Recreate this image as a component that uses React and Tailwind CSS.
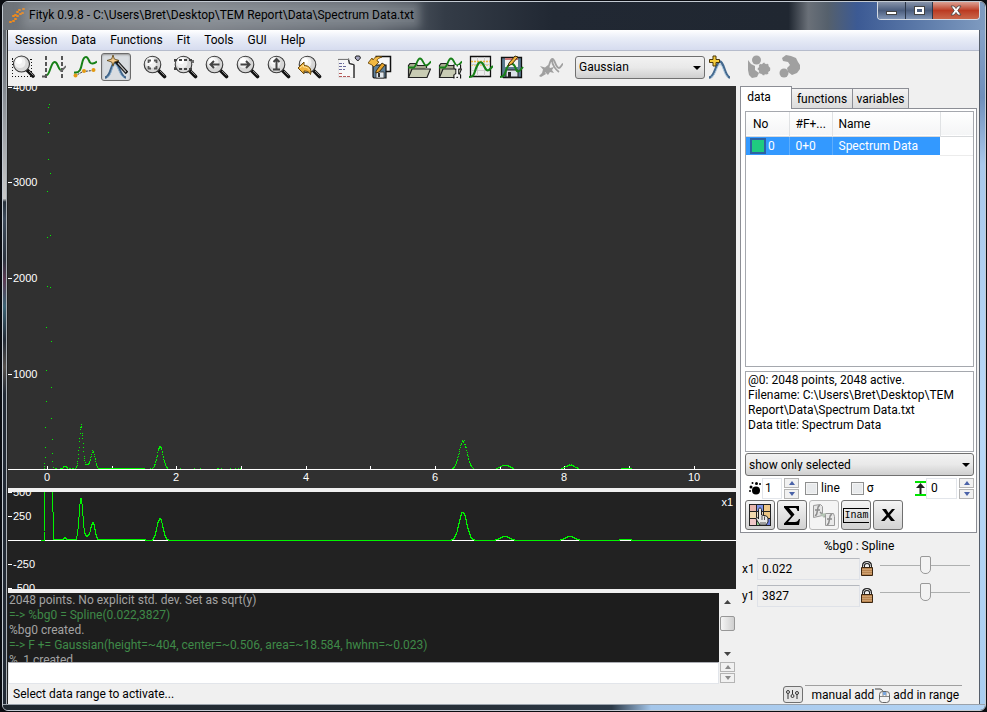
import React from "react";

const noise = (i) => {
  const v = Math.sin(i * 12.9898) * 43758.5453;
  return v - Math.floor(v);
};

const PEAKS = [
  [57, 3, 1.5],
  [73, 41, 1.8],
  [85, 16, 2],
  [79, 4, 5],
  [152, 22, 2.9],
  [455, 28, 3.9],
  [497, 4, 4.5],
  [562, 4, 4.5],
  [618, 1, 5],
];

const signal = (x) =>
  PEAKS.reduce((sum, [c, h, s]) => sum + h * Math.exp(-((x - c) ** 2) / (2 * s * s)), 0);

const BEAM = [
  [41, 18], [40, 21], [41, 37], [40, 46], [40, 73], [42, 87], [39, 105], [42, 149], [39, 151],
  [39, 200], [42, 201], [38, 241], [43, 255], [38, 284], [43, 301], [38, 315], [43, 332],
  [37, 341], [44, 353], [37, 361], [44, 367], [37, 371], [44, 375], [36, 377], [36, 380], [36, 382], [45, 381],
];

function buildDots() {
  let d = "";
  const dot = (x, y) => {
    d += `M${x} ${y}h1v1h-1z`;
  };
  BEAM.forEach(([x, y]) => dot(x, y));
  for (let i = 0; i < 1920; i++) {
    const x = 46 + i / 3;
    const s = signal(x);
    const r = noise(i + 7);
    if (s > 0.6) {
      dot(Math.floor(x), Math.round(382.6 - s * (0.94 + r * 0.12)));
    } else if (x > 52 && x < 138 && r > 0.45) {
      dot(Math.floor(x), 382);
    } else if (x < 240 && r > 0.97) {
      dot(Math.floor(x), 382);
    }
  }
  return d;
}

function buildResidual() {
  let d = "M33 48.5H36V40L37 0V-10H44L45 20L46 47.5";
  for (let x = 47; x < 694; x++) {
    const s = signal(x) * (0.98 + noise(x) * 0.06);
    const base = x < 138 ? 47.5 : 48.5;
    d += `L${x} ${Math.min(base, 48.5 - Math.round(s))}`;
  }
  return d;
}

const DOTS = buildDots();
const RESIDUAL = buildResidual();
const X_TICKS = [39, 104, 168, 233, 298, 362, 427, 492, 556, 621, 686];
const X_LABELS = [[39, "0"], [168, "2"], [298, "4"], [427, "6"], [556, "8"], [686, "10"]];

function MainPlot() {
  return (
    <svg className="block h-full w-full bg-[#303030] text-[11px]" role="img" aria-label="Data plot">
      <g fill="#fff" shapeRendering="crispEdges">
        <rect x="0" y="383" width="100%" height="1" />
        {X_TICKS.map((x) => <rect key={x} x={x} y="380" width="1" height="3" />)}
        {[1, 96, 192, 288].map((y) => <rect key={y} x="0" y={y} width="4" height="1" />)}
      </g>
      <g fill="#fff" className="font-['Liberation_Sans',sans-serif]">
        {[["4000", 5], ["3000", 100], ["2000", 196], ["1000", 292]].map(([t, y]) => (
          <text key={t} x="5" y={y}>{t}</text>
        ))}
        {X_LABELS.map(([x, t]) => <text key={t} x={x} y="395" textAnchor="middle">{t}</text>)}
      </g>
      <path d={DOTS} fill="#00f400" shapeRendering="crispEdges" />
    </svg>
  );
}

function ResidualPlot() {
  return (
    <svg className="block h-full w-full bg-[#222222] text-[11px]" role="img" aria-label="Residual plot">
      <g fill="#fff" shapeRendering="crispEdges">
        <rect x="0" y="48" width="100%" height="1" />
        {[0, 24, 72, 96].map((y) => <rect key={y} x="0" y={y} width="4" height="1" />)}
      </g>
      <g fill="#fff" className="font-['Liberation_Sans',sans-serif]">
        <text x="5" y="4">500</text>
        <text x="5" y="28">250</text>
        <text x="5" y="76">-250</text>
        <text x="5" y="100">-500</text>
        <svg x="100%" overflow="visible"><text x="-3" y="14" textAnchor="end">x1</text></svg>
      </g>
      <path d={RESIDUAL} fill="none" stroke="#00f400" shapeRendering="crispEdges" />
    </svg>
  );
}

const Icon = ({ children, size = 24 }) => (
  <svg width={size} height={size} viewBox={`0 0 ${size} ${size}`} fill="none" className="shrink-0" aria-hidden="true">
    {children}
  </svg>
);

const Lens = ({ children }) => (
  <Icon>
    <path d="M15 15l6.500 6.500" stroke="#111" strokeWidth="3.600" strokeLinecap="round" />
    <path d="M17 16l4.500 4.500" stroke="#8a8a8a" strokeWidth="1" />
    <circle cx="9.500" cy="9.500" r="8.300" fill="#d6d6d6" stroke="#3c3c3c" strokeWidth="1.100" />
    <circle cx="8" cy="7.500" r="5.500" fill="#f0f0f0" />
    <circle cx="7" cy="6" r="3" fill="#fff" />
    {children}
  </Icon>
);

const ZoomRect = () => (
  <Icon>
    <path d="M1.500 3v19M1 4.500h19M1 21.500h20M20.500 4v18" stroke="#111" strokeDasharray="1 2" shapeRendering="crispEdges" />
    <path d="M16 15l6 6" stroke="#111" strokeWidth="3.600" strokeLinecap="round" />
    <path d="M18 16l4.500 4.500" stroke="#8a8a8a" />
    <circle cx="10.500" cy="9" r="8" fill="#d9d9d9" stroke="#3c3c3c" strokeWidth="1.100" />
    <circle cx="9" cy="7.500" r="5.500" fill="#f2f2f2" />
    <circle cx="8" cy="6" r="3" fill="#fff" />
  </Icon>
);
const DataRange = () => (
  <Icon>
    <path d="M4 1v22M20 1v22" stroke="#555" strokeWidth="2" strokeDasharray="4 2" shapeRendering="crispEdges" />
    <path d="M0 21.500h3l2-2" stroke="#555" strokeWidth="2" />
    <path d="M5 20c3-1 4-13 7.500-13s3 6 6 8" stroke="#178017" strokeWidth="2" />
    <path d="M18 16l2-.5 4-4.500" stroke="#666" strokeWidth="1.700" />
  </Icon>
);
const Baseline = () => (
  <Icon>
    <path d="M1 17.500c6 1 7-4 8-9s2-6.500 4-6.500 3 4 4 5.500 4 1.500 7-1" stroke="#178017" strokeWidth="2" />
    <path d="M2 21l8-4.500 10-1" stroke="#333" strokeDasharray="2 1" />
    <circle cx="2.500" cy="20.500" r="2" fill="#e39a12" /><circle cx="11" cy="16" r="2" fill="#e39a12" /><circle cx="20.500" cy="15" r="2" fill="#e39a12" />
  </Icon>
);
const Wand = () => (
  <Icon>
    <path d="M1 22.500c6 0 6-15 10-15s5 15 11 15" stroke="#3f648a" strokeWidth="2.400" />
    <path d="M3 22.500c5-2 5-13 8-13s4 11 9 13" stroke="#8fb2d0" />
    <path d="M12 6l11 12" stroke="#111" strokeWidth="3.400" />
    <path d="M14 8l8 9" stroke="#bbb" strokeWidth="1.200" />
    <path d="M9 0l1.300 4 4.700 1.500-4.700 1.500L9 11 7.700 7 3 5.500 7.700 4z" fill="#f2c98c" stroke="#5c4413" strokeWidth=".8" />
  </Icon>
);
const ZoomAll = () => <Lens><path d="M5.500 8V5.500H8M11 5.500h2.500V8M13.500 11v2.500H11M8 13.500H5.500V11" stroke="#555" strokeWidth="1.800" /></Lens>;
const ZoomH = () => <Lens><path d="M0 5h20M0 14h20" stroke="#444" strokeWidth="1.800" strokeDasharray="3 2" /><path d="M1 5v2M19 5v3M1 12v2" stroke="#444" strokeWidth="1.500" /></Lens>;
const ZoomLeft = () => <Lens><path d="M14.500 9.500h-9M9 6l-3.500 3.500L9 13" stroke="#444" strokeWidth="2" /></Lens>;
const ZoomRight = () => <Lens><path d="M4.500 9.500h9M10 6l3.500 3.500L10 13" stroke="#444" strokeWidth="2" /></Lens>;
const ZoomV = () => <Lens><path d="M9.500 4.500v10M6.500 7l3-3 3 3M6 14.500h7" stroke="#444" strokeWidth="2" /></Lens>;
const ZoomPrev = () => (
  <Lens>
    <path d="M0 13l6-6v3.500c5 0 8 3 6.500 9C11 16.500 9 16 6 16v3z" fill="#f0b23c" stroke="#6b4a0c" />
    <path d="M2 13l3.500-3v2c3 0 5 1 6 3" stroke="#ffe29a" />
  </Lens>
);
const Script = () => (
  <Icon>
    <path d="M1.500 3.500h11l5 5v14h-16z" fill="#f7f7f7" stroke="#e2e2e2" />
    <path d="M11 4c1 0 1 4 1.500 4.500S17 9 17 10v13" stroke="#333" strokeWidth="1.500" />
    <path d="M1 4.500h11" stroke="#777" />
    <path d="M2 8.500h5M2 11.500h8M2 14.500h6" stroke="#6a6a9c" strokeDasharray="3 1" strokeWidth="1.200" />
    <path d="M2 18.500h4M2 21.500h12" stroke="#b55b5b" strokeDasharray="3 1" strokeWidth="1.200" />
    <path d="M19 1h3.500l1 2-2.700 3-2.800-3z" fill="#a5a5c0" stroke="#222" />
  </Icon>
);
const SaveSession = () => (
  <Icon>
    <path d="M7.500 1.500h15v15h-6" fill="#f8f8f8" stroke="#111" strokeWidth="1.500" />
    <path d="M5 10h13v13H6l-1-1z" fill="#5f7f99" stroke="#111" strokeWidth="1.200" />
    <path d="M8 17h8v6H8z" fill="#dfe6ec" stroke="#333" strokeWidth=".8" /><path d="M10 18h2v4h-2z" fill="#333" />
    <path d="M0 8l4-5 1 2c2-4 6-4 9-3-3 1-5 2-5 4l2 1-5 5-2-2z" fill="#f3b942" stroke="#6b4a0c" strokeWidth=".9" />
    <path d="M8 16l6-8 3 2-6 7-3 1z" fill="#e9a52b" stroke="#3a2a0a" strokeWidth=".9" />
  </Icon>
);
const folder = (
  <>
    <path d="M1.500 22V10.500l1.500-2h6l1.500 2h9V13" fill="#a6a98f" stroke="#222" strokeWidth="1.200" />
    <path d="M1.500 22.500L5 14h18.500L20 22.500z" fill="#c9ccb4" stroke="#222" strokeWidth="1.200" />
    <path d="M1 12.500h6c3-2 3-9 6-9s3 6 6 7c2 0 3-2 5-4" stroke="#178017" strokeWidth="1.800" />
  </>
);
const OpenFolder = () => <Icon>{folder}</Icon>;
const OpenCustom = () => (
  <Icon>
    {folder}
    <path d="M16 9.500v3.500l2 1.500v4L16 20v3.500M22.500 9.500V13l-2 1.500v4l2 1.500v3.500" stroke="#111" strokeWidth="1.300" />
    <path d="M17.500 10v2.500h3.500V10M19.300 12v9M17.500 23.500v-3h3.500v3" stroke="#f4f4f4" strokeWidth="1.800" />
  </Icon>
);
const GraphIcon = () => (
  <Icon>
    <path d="M1.500 1.500h20v20h-20z" fill="#ededed" stroke="#111" strokeWidth="1.300" />
    <path d="M2 9.500h19M2 15.500h19M8.500 2v19M15.500 2v19" stroke="#ccc" />
    <path d="M2 6.500h19" stroke="#eeb23a" strokeWidth="1.500" strokeDasharray="2 1" /><path d="M2 10.500h19" stroke="#f0cf84" strokeDasharray="2 1" />
    <path d="M0 22c6 0 5-5 8-11 2-5 5-5 7 0 2 4 3 5 5 4l4-4" stroke="#178017" strokeWidth="2.200" />
  </Icon>
);
const SaveGraph = () => (
  <Icon>
    <path d="M1.500 2.500h20v20h-18l-2-2z" fill="#5a7a90" stroke="#111" strokeWidth="1.300" />
    <path d="M5 3h13v9H5z" fill="#f1f1f1" /><path d="M5 3h13v2H5z" fill="#c77" />
    <path d="M6 15h12v7H6z" fill="#dbe2e7" stroke="#222" /><path d="M8 17h3v5H8z" fill="#222" />
    <path d="M0 22c6 0 5-7 8-11 3-4 6-3 8 3 1 4 3 3 7-2" stroke="#178017" strokeWidth="2" />
    <path d="M9 8l6-7 3 1-6 7-4 2z" fill="#f0b23c" stroke="#3a2a0a" />
  </Icon>
);
const RunFit = () => (
  <Icon>
    <path d="M9 13c2-4 2-9 4.500-9s3 9 6.500 9c1.500 0 2-2 4-4.500M13 5c0 5 4 10 7 12" stroke="#a0a0a0" strokeWidth="1.800" />
    <path d="M1 11l5 1.500 3-2.500 2 3 4-1-2 3 2 3-4-1-2 3-3-3-3 1 1-3.500z" fill="#a0a0a0" />
    <path d="M0 21l5-5 2 3-5 3z" fill="#a0a0a0" />
  </Icon>
);
const AddPeak = () => (
  <Icon>
    <path d="M1 22.500c6 0 7-16 11-16s5 16 10 16" stroke="#456a8f" strokeWidth="2.400" />
    <path d="M3 22.500c5-2 6-13 9-13s4 11 8 13" stroke="#a9c5dc" />
    <path d="M5 1h3v3.500h3.500v3H8V11H5V7.500H1.500v-3H5z" fill="#f5cd3d" stroke="#4a3608" />
  </Icon>
);
const ClusterA = () => (
  <Icon>
    <path d="M1 5l3 4 4 2v4l4 3-2 4-5 1-3-3-1-5z" fill="#a0a0a0" />
    <circle cx="9.500" cy="5" r="4.500" fill="#a0a0a0" />
    <circle cx="17" cy="14" r="5.500" fill="#a0a0a0" stroke="#a0a0a0" strokeWidth="1.500" strokeDasharray="2 2" />
  </Icon>
);
const ClusterB = () => (
  <Icon>
    <path d="M4 3l4-3 5 1 5 2 2 4 2 3v4l-3 4-5 2-4-3-1-4 3-3-2-3-5-1z" fill="#a0a0a0" />
    <circle cx="6" cy="18" r="4.500" fill="#a0a0a0" />
  </Icon>
);

const GROUPS = [
  [["Zoom", ZoomRect], ["Data range", DataRange], ["Baseline", Baseline], ["Add peak mode", Wand, true]],
  [["Zoom all", ZoomAll], ["Fit vertically", ZoomH], ["Scroll left", ZoomLeft], ["Scroll right", ZoomRight], ["Scroll up", ZoomV], ["Previous zoom", ZoomPrev]],
  [["Execute script", Script], ["Save session", SaveSession]],
  [["Open data", OpenFolder], ["Custom load", OpenCustom], ["Edit data", GraphIcon], ["Save data", SaveGraph]],
  [["Run fit", RunFit]],
];

function ToolButton({ label, glyph: Glyph, active }) {
  return (
    <button
      aria-label={label}
      className={
        "flex h-[28px] w-[30px] items-center justify-center rounded-[3px] " +
        (active ? "border border-[#6b6b6b] bg-[#d9dde1] shadow-[inset_0_1px_2px_#999]" : "")
      }
    >
      <Glyph />
    </button>
  );
}

function Choice({ label, value, className }) {
  return (
    <div className={"relative " + className}>
      <select
        aria-label={label}
        className="block h-[23px] w-full appearance-none rounded-[3px] border border-[#707070] bg-linear-to-b from-[#f2f2f2] via-[#e9e9e9] to-[#cfcfcf] pl-[3px] text-[12px] leading-none text-black"
      >
        <option>{value}</option>
      </select>
      <svg width="8" height="4" className="pointer-events-none absolute top-[10px] right-[4px]"><path d="M0 0h8L4 4z" fill="#000" /></svg>
    </div>
  );
}

function Spin({ muted }) {
  const tone = muted ? "#8a8a8a" : "#4a62a8";
  return (
    <div className="flex w-[15px] flex-col gap-px">
      {["M0 4h6L3 0z", "M0 0h6L3 4z"].map((d, i) => (
        <button key={d} aria-label={i ? "Decrease" : "Increase"} className="flex h-[10px] items-center justify-center border border-[#b4b4b4] bg-[#f1f1f1]">
          <svg width="6" height="4"><path d={d} fill={tone} /></svg>
        </button>
      ))}
    </div>
  );
}

const PanelButton = ({ label, children, disabled }) => (
  <button
    aria-label={label}
    disabled={disabled}
    className="flex size-[30px] items-center justify-center rounded-[3px] border border-[#707070] bg-linear-to-b from-[#f4f4f4] to-[#d2d2d2] disabled:border-[#b8b8b8] disabled:bg-[#f4f4f4] disabled:bg-none"
  >
    {children}
  </button>
);

const ColorGrid = () => (
  <Icon>
    <path d="M1 1h22v22H1z" fill="#222" />
    {[["#e8b7ae", 2, 2], ["#7d93e6", 9, 2], ["#f0c98a", 16, 2], ["#f2d9ae", 2, 9], ["#e8dcc8", 9, 9], ["#eac584", 16, 9], ["#f0c8c8", 2, 16], ["#8fd08f", 9, 16], ["#6c7fe0", 16, 16]].map(([c, x, y]) => (
      <rect key={x + "-" + y} x={x} y={y} width="6" height="6" fill={c} />
    ))}
    <path d="M10.500 6.500c0-2 3-2 3 0V12l5 1 1.500 2v4l-2 3h-6l-4-6c0-2 2-2 2.500 0z" fill="#e8e8e8" stroke="#222" />
    <path d="M14 13v4M16.500 13.500v3.500M12 20h6" stroke="#555" />
  </Icon>
);
const Sigma = () => <Icon><path d="M4 3h15v5h-1.500c-.5-2-1-3-3-3H9l5.500 6.500L8 19h7c2 0 3-1 4-3h1l-1 6H4v-1.500L11 13 4 4.500z" fill="#000" /></Icon>;
const CopyFn = () => (
  <Icon>
    <path d="M1.500 2.500l7-1 2 2v9l-9 2z" fill="#e6e6e6" stroke="#9a9a9a" /><path d="M13.500 10.500h8l1 3v9h-9z" fill="#e9e9e9" stroke="#9a9a9a" />
    <path d="M8 3c-2-1-2 2-2.500 4S5 13 3 12M3 7h5M20 12c-2-1-2 2-2.500 4s-.5 6-2.500 5M15 16h5M8 9l5 5" stroke="#8c8c8c" strokeWidth="1.500" />
    <path d="M8 11l6-1-2 5z" fill="#b5c5b5" />
  </Icon>
);
const Cross = () => <Icon><path d="M6 6h4l2.500 4L16 6h3l-5 6 5 6h-4l-3-4-3.500 4H5l5.500-6z" fill="#000" /></Icon>;

const Lock = () => (
  <svg width="12" height="15" fill="none" aria-hidden="true">
    <path d="M2.500 7V4.500c0-4 7-4 7 0V7" stroke="#222" strokeWidth="3" /><path d="M2.500 7V4.500c0-4 7-4 7 0V7" stroke="#ddd" />
    <path d="M.5 6.500h11v8H.5z" fill="#b98550" stroke="#3a2510" /><path d="M1 8.500h10M1 10.500h10M1 12.500h10" stroke="#dcb184" strokeWidth=".6" />
  </svg>
);

function Param({ name, value }) {
  return (
    <div className="flex h-[27px] items-center">
      <label htmlFor={"p-" + name} className="w-[17px] pl-[2px]">{name}</label>
      <input id={"p-" + name} defaultValue={value} className="h-[22px] min-w-0 flex-1 border border-[#dfe2e8] border-t-[#b5b8be] bg-[#efefef] pl-[4px]" />
      <button aria-label={"Lock " + name} className="flex w-[13px] justify-center"><Lock /></button>
      <input
        type="range"
        aria-label={name + " slider"}
        className="mr-[8px] ml-[7px] h-[20px] w-[90px] appearance-none self-start bg-[linear-gradient(#aeb0b0,#aeb0b0)] bg-[length:100%_1px] bg-center bg-no-repeat [&::-webkit-slider-thumb]:h-[18px] [&::-webkit-slider-thumb]:w-[11px] [&::-webkit-slider-thumb]:appearance-none [&::-webkit-slider-thumb]:rounded-t-[2px] [&::-webkit-slider-thumb]:rounded-b-[5px] [&::-webkit-slider-thumb]:border [&::-webkit-slider-thumb]:border-[#999] [&::-webkit-slider-thumb]:bg-[#f3f3f3]"
      />
    </div>
  );
}

function TitleBar() {
  return (
    <header className="flex h-[28px] shrink-0 items-start bg-[linear-gradient(to_right,#6d7278_0%,#7d8289_20%,#5d646d_38%,#343c47_45%,#212833_56%,#202731_80%,#6a7078_82%,#55606c_84%,#3c5a94_87%,#5f7dab_94%,#7f9bc0_100%)] pl-[6px]">
      <svg width="16" height="18" className="mt-[4px]" aria-hidden="true">
        {[[0, 15], [3, 14], [5, 12], [5, 8], [7, 5], [7, 9], [9, 3], [3, 9], [10, 7], [13, 2], [12, 6]].map(([x, y]) => (
          <rect key={x + "-" + y} x={x} y={y} width="3" height="2" rx="1" fill="#f08a1c" />
        ))}
      </svg>
      <h1 className="mt-[4px] ml-[4px] flex-1 text-[12px] leading-[18px] whitespace-nowrap text-black">
        <span className="bg-[#9aa0a6]/50 shadow-[0_0_8px_6px_rgba(154,160,166,0.5)]">Fityk 0.9.8 - C:\Users\Bret\Desktop\TEM Report\Data\Spectrum Data.txt</span>
      </h1>
      <div className="mr-[5px] flex h-[18px] overflow-hidden rounded-b-[4px] border border-t-0 border-[#d5dbe3]">
        <button aria-label="Minimize" className="flex w-[28px] items-center justify-center border-r border-[#2b3648] bg-linear-to-b from-[#8894aa] via-[#4b5d7d] to-[#8195b5]">
          <span className="mt-[4px] h-[4px] w-[11px] border border-[#444] bg-white" />
        </button>
        <button aria-label="Maximize" className="flex w-[27px] items-center justify-center border-r border-[#2b3648] bg-linear-to-b from-[#8894aa] via-[#4b5d7d] to-[#8195b5]">
          <span className="h-[9px] w-[11px] border border-[#444] bg-white p-[2px]"><span className="block h-[3px] bg-[#4b5d7d]" /></span>
        </button>
        <button aria-label="Close" className="flex w-[46px] items-center justify-center bg-linear-to-b from-[#dba093] via-[#bb3a22] to-[#c9664a]">
          <svg width="12" height="11"><path d="M1 1h3l2 2.500L8 1h3L7.800 5.500 11 10H8L6 7.500 4 10H1l3.200-4.500z" fill="#fff" stroke="#444" strokeWidth=".8" /></svg>
        </button>
      </div>
    </header>
  );
}

function DataPanel() {
  return (
    <section className="flex flex-col pr-px">
      <div role="tablist" className="flex h-[22px] items-end text-[12px]">
        <button role="tab" aria-selected="true" className="z-10 -mb-px h-[23px] w-[52px] border border-b-0 border-[#8c8e95] bg-white pr-[14px] pb-[2px] text-center">
          data
        </button>
        <button role="tab" className="h-[20px] w-[61px] border border-b-0 border-l-0 border-[#8c8e95] bg-linear-to-b from-[#f3f3f3] to-[#dcdcdc]">functions</button>
        <button role="tab" className="h-[20px] w-[56px] border border-b-0 border-l-0 border-[#8c8e95] bg-linear-to-b from-[#f3f3f3] to-[#dcdcdc]">variables</button>
      </div>
      <div className="flex flex-col border border-[#8c8e95] bg-white pt-[2px] pr-[2px] pb-[2px] pl-[4px]">
        <div className="h-[256px] border border-[#a5a8ae] bg-white">
          <table className="w-full table-fixed border-collapse text-left text-[12px]">
            <thead>
              <tr className="h-[24px] border-b border-[#d8dadc] bg-linear-to-b from-white to-[#f4f5f6]">
                <th className="w-[43px] border-r border-[#e0e2e4] pl-[7px] font-normal">No</th>
                <th className="w-[43px] border-r border-[#e0e2e4] pl-[6px] font-normal">#F+...</th>
                <th className="w-[108px] border-r border-[#e0e2e4] pl-[6px] font-normal">Name</th>
                <th />
              </tr>
            </thead>
            <tbody>
              <tr className="h-[19px] text-white">
                <td className="border-r border-[#5eaefd] bg-[#3399ff]">
                  <div className="flex items-center"><span className="ml-[4px] size-[16px] border-2 border-[#2d62a3] bg-[#1fcb80]" /><span className="ml-[2px]">0</span></div>
                </td>
                <td className="border-r border-[#5eaefd] bg-[#3399ff] pl-[6px]">0+0</td>
                <td className="bg-[#3399ff] pl-[6px]">Spectrum Data</td>
                <td className="border-b border-[#ececec]" />
              </tr>
            </tbody>
          </table>
        </div>
        <textarea
          aria-label="Dataset information"
          readOnly
          className="mt-[4px] block h-[81px] w-full resize-none overflow-hidden border border-[#a5a8ae] bg-white px-[2px] py-[1px] text-[12px] leading-[15px]"
          defaultValue={"@0: 2048 points, 2048 active.\nFilename: C:\\Users\\Bret\\Desktop\\TEM Report\\Data\\Spectrum Data.txt\nData title: Spectrum Data"}
        />
        <Choice label="Displayed data" value="show only selected" className="mt-px w-full" />
        <div className="flex h-[24px] items-center">
          <svg width="14" height="14" className="ml-[3px] shrink-0" aria-hidden="true">
            <circle cx="8" cy="9.500" r="4" /><circle cx="3" cy="6" r="1.500" /><circle cx="4.500" cy="2" r="1" /><circle cx="8.500" cy="2.500" r="1.500" /><circle cx="2" cy="10" r="1" /><circle cx="12" cy="3" r="1" />
          </svg>
          <input aria-label="Point size" defaultValue="1" className="h-[21px] w-[20px] border border-[#e2e5ea] pl-[2px] text-[12px]" />
          <span className="w-[2px]" />
          <Spin />
          <label className="ml-[6px] flex items-center gap-[3px]">
            <input type="checkbox" className="size-[13px] appearance-none border border-[#8e8f8f] bg-[#e8eaec] shadow-[inset_0_0_0_1px_#f4f4f4]" />line
          </label>
          <label className="ml-[11px] flex items-center gap-[3px]">
            <input type="checkbox" className="size-[13px] appearance-none border border-[#8e8f8f] bg-[#e8eaec] shadow-[inset_0_0_0_1px_#f4f4f4]" />σ
          </label>
          <svg width="11" height="15" className="ml-auto" aria-hidden="true">
            <path d="M0 1h11M0 14h11" stroke="#00e400" strokeWidth="2" /><path d="M5.500 4v9" stroke="#222" strokeWidth="2" /><path d="M1 7l4.500-5L10 7z" fill="#222" />
          </svg>
          <input aria-label="Vertical shift" defaultValue="0" className="h-[21px] w-[31px] border border-[#e2e5ea] pl-[4px] text-[12px]" />
          <span className="w-[2px]" />
          <Spin />
        </div>
        <div className="flex gap-[2px]">
          <PanelButton label="Colors"><ColorGrid /></PanelButton>
          <PanelButton label="Sum"><Sigma /></PanelButton>
          <PanelButton label="Copy functions" disabled><CopyFn /></PanelButton>
          <PanelButton label="Rename">
            <span className="border border-r-0 border-black font-['Liberation_Mono',monospace] text-[10px] leading-[13px]">Inam</span>
          </PanelButton>
          <PanelButton label="Delete"><Cross /></PanelButton>
        </div>
      </div>
    </section>
  );
}

function Console() {
  return (
    <div className="flex h-[91px] shrink-0">
      <div className="flex min-w-0 flex-1 flex-col">
        <div role="log" className="h-[69px] overflow-hidden bg-[#1d1d1d] pl-px text-[12px] leading-[15px] whitespace-nowrap text-[#a3a3a3]">
          <p>2048 points. No explicit std. dev. Set as sqrt(y)</p>
          <p className="text-[#3f8a48]">=-&gt; %bg0 = Spline(0.022,3827)</p>
          <p>%bg0 created.</p>
          <p className="text-[#3f8a48]">=-&gt; F += Gaussian(height=~404, center=~0.506, area=~18.584, hwhm=~0.023)</p>
          <p>%_1 created.</p>
        </div>
        <input aria-label="Command" className="h-[22px] border border-[#e2e5ea] border-t-[#abadb3] bg-white px-1" />
      </div>
      <div className="flex w-[17px] flex-col items-start pl-px">
        <div className="flex h-[69px] w-[15px] flex-col items-center bg-[#f0f0f0] pt-[7px] pb-[6px]">
          <svg width="7" height="4"><path d="M0 4h7L3.500 0z" fill="#444" /></svg>
          <div className="mt-[12px] h-[15px] w-[15px] rounded-[2px] border border-[#979797] bg-linear-to-r from-[#f5f5f5] to-[#cfcfcf]" />
          <svg width="7" height="4" className="mt-auto"><path d="M0 0h7L3.500 4z" fill="#444" /></svg>
        </div>
        <Spin muted />
      </div>
    </div>
  );
}

export default function App() {
  return (
    <div className="h-screen min-h-[600px] w-full bg-[#0b0d12] pt-px pr-px pb-px pl-[2px] font-[Roboto,sans-serif] text-[12px] text-black">
      <div className="flex h-full flex-col overflow-hidden rounded-[6px] border border-[#c3cad2] bg-[#222a33]">
        <TitleBar />
        <div className="flex min-h-0 flex-1">
          <div className="w-[4px] shrink-0 border-r border-[#aab0b6] bg-[linear-gradient(to_bottom,#60666d_0%,#8a8f95_10%,#c9c9c9_25%,#27303a_25.500%,#3c4a5a_28%,#2a323d_34%,#5a3a52_37%,#3b6273_41%,#222a35_46%,#55504c_50%,#222a35_54%,#222a35_100%)]" />
          <main className="flex min-w-0 flex-1 flex-col border-l border-[#222] bg-[#f0f0f0]">
            <nav className="flex h-[21px] shrink-0 items-center gap-[14px] border-b border-[#b6bccc] bg-linear-to-b from-white via-[#e9edf7] via-40% to-[#d6dcef] pl-[7px]">
              {["Session", "Data", "Functions", "Fit", "Tools", "GUI", "Help"].map((m) => <button key={m}>{m}</button>)}
            </nav>
            <div className="flex h-[35px] shrink-0 items-center gap-[9px] pb-[3px]">
              {GROUPS.map((group, i) => (
                <div key={i} className="flex gap-px">
                  {group.map(([label, glyph, active]) => <ToolButton key={label} label={label} glyph={glyph} active={active} />)}
                </div>
              ))}
              <div className="flex items-center">
                <Choice label="Peak function" value="Gaussian" className="w-[130px]" />
                <ToolButton label="Add peak" glyph={AddPeak} />
              </div>
              <div className="flex gap-px">
                <ToolButton label="Toggle data" glyph={ClusterA} />
                <ToolButton label="Toggle peaks" glyph={ClusterB} />
              </div>
            </div>
            <div className="flex min-h-0 flex-1 gap-[4px]">
              <div className="flex min-w-0 flex-1 flex-col gap-[4px]">
                <div className="min-h-0 flex-1"><MainPlot /></div>
                <div className="h-[97px] shrink-0"><ResidualPlot /></div>
                <Console />
              </div>
              <aside className="mr-px flex w-[238px] shrink-0 flex-col">
                <DataPanel />
                <h2 className="mt-[5px] text-center leading-[17px]">%bg0 : Spline</h2>
                <Param name="x1" value="0.022" />
                <Param name="y1" value="3827" />
              </aside>
            </div>
            <footer className="flex h-[20px] shrink-0 items-center pr-[17px] pl-[5px]">
              <p className="flex-1">Select data range to activate...</p>
              <button aria-label="Settings" className="mr-[2px] flex h-[17px] w-[20px] items-center justify-center rounded-[3px] border border-[#707070] bg-[#e6e6e6]">
                <svg width="13" height="9" fill="none" stroke="#333"><circle cx="2" cy="2" r="1.500" /><path d="M2 4v5M6.500 0v4M11 4v5" /><circle cx="6.500" cy="6" r="1.500" /><circle cx="11" cy="3" r="1.500" /></svg>
              </button>
              <div className="flex h-[18px] items-center border-t border-[#a0a0a0] pr-[3px] pl-[7px]">
                <span>manual add</span>
                <svg width="19" height="16" fill="none" aria-hidden="true">
                  <path d="M1 2h5c3 0 2 3 4 3" stroke="#444" /><rect x="5.500" y="4.500" width="10" height="11" rx="3" fill="#f4f4f4" stroke="#666" /><path d="M6 9.500h9M9 5v4M12 5v4" stroke="#888" /><rect x="9" y="5" width="3" height="3" fill="#7aa7dd" />
                </svg>
                <span>add in range</span>
              </div>
            </footer>
          </main>
          <div className="w-[6px] shrink-0 border-l border-[#555e6b] bg-[linear-gradient(to_bottom,#86a2c8_0%,#6f8fbb_10%,#a9c9ec_20%,#b9d9f8_60%,#a9cdf0_100%)]" />
        </div>
        <div className="h-[6px] shrink-0 border-t border-[#9aa2ab] bg-[linear-gradient(to_right,#20282f_0%,#28313a_50%,#2c3a48_62%,#a4c6ea_66%,#b4d4f4_100%)]" />
      </div>
    </div>
  );
}
